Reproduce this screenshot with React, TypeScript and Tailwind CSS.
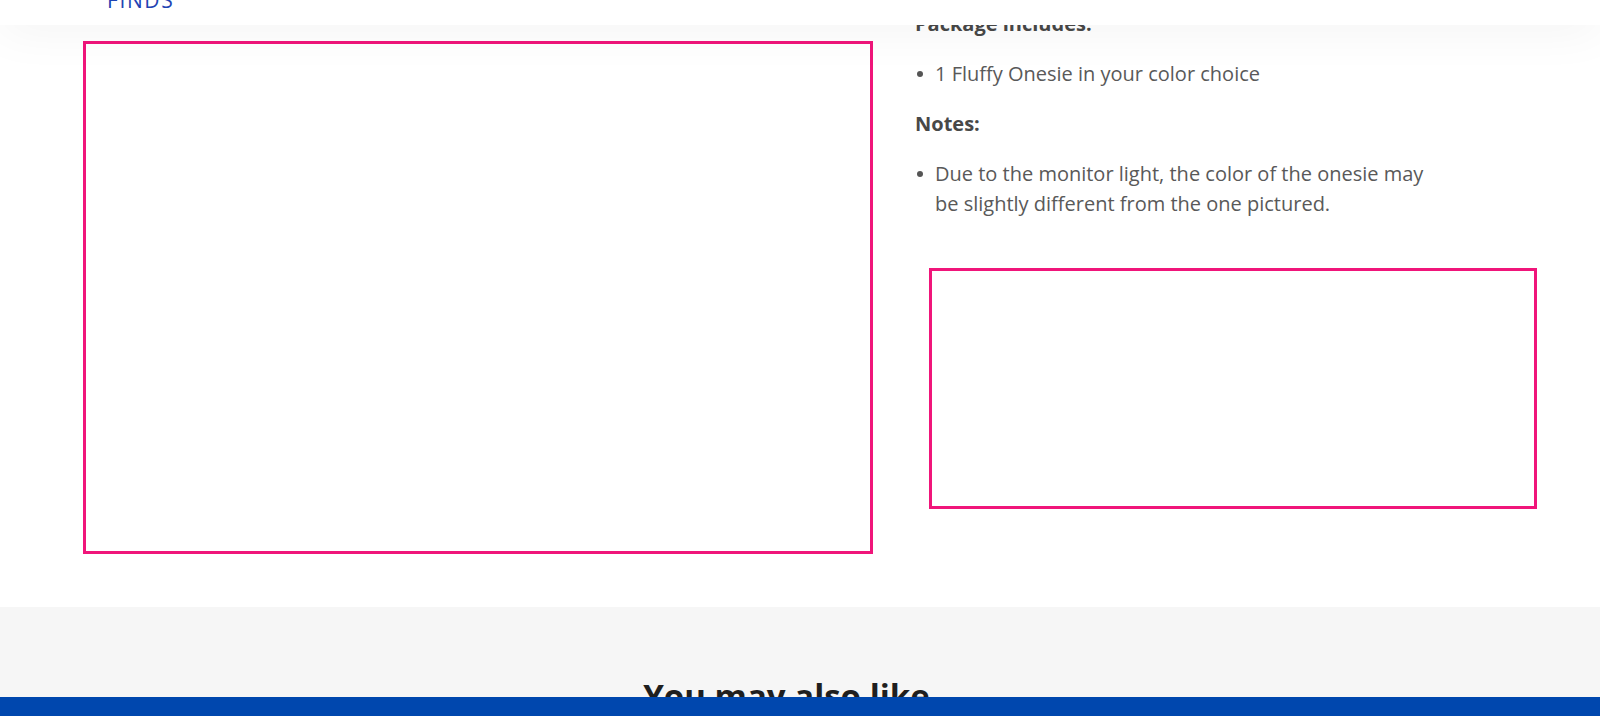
import React from "react";

const Bullet: React.FC<{ children: React.ReactNode }> = ({ children }) => (
    <li className="flex items-start">
        <span className="ml-[2px] mr-[12px] mt-[12px] h-[6px] w-[6px] shrink-0 rounded-full bg-[#555]" />
        <span>{children}</span>
    </li>
);

export default function App() {
    return (
        <div className="relative h-screen overflow-hidden bg-white font-['Open_Sans',sans-serif]">
            {/* sticky header, scrolled so only the bottom of the nav shows */}
            <header className="absolute inset-x-0 top-0 z-10 h-[25px] overflow-hidden bg-white shadow-[0_0_50px_rgba(0,0,0,0.08)]">
                <div className="-mt-[10px] pl-[107px] text-[21px] leading-[21px] tracking-[1.6px] text-[#1f44b3] uppercase">
                    Finds
                </div>
            </header>

            <section className="flex pb-[53px]">
                <div className="pl-[83px] pt-[41px]">
                    <div className="h-[513px] w-[790px] border-[3px] border-[#f0157a]" />
                </div>

                <div className="ml-[42px] pt-[9px] text-[20px] leading-[30px] text-[#595959]">
                    <p className="mb-[20px] font-bold text-[#484848]">Package includes:</p>
                    <ul className="mb-[20px]">
                        <Bullet>1 Fluffy Onesie in your color choice</Bullet>
                    </ul>
                    <p className="mb-[20px] font-bold text-[#484848]">Notes:</p>
                    <ul className="w-[520px]">
                        <Bullet>
                            Due to the monitor light, the color of the onesie may be slightly different from the one
                            pictured.
                        </Bullet>
                    </ul>
                    <div className="ml-[14px] mt-[49px] h-[241px] w-[608px] border-[3px] border-[#f0157a]" />
                </div>
            </section>

            <section className="h-[400px] bg-[#f6f6f6] pl-[83px] pr-[110px] pt-[69px]">
                <h2 className="text-center text-[33px] leading-[40px] font-bold text-[#1f1f1f]">You may also like</h2>
            </section>

            <div className="absolute inset-x-0 bottom-0 z-10 h-[19px] bg-[#0047ae]" />
        </div>
    );
}
